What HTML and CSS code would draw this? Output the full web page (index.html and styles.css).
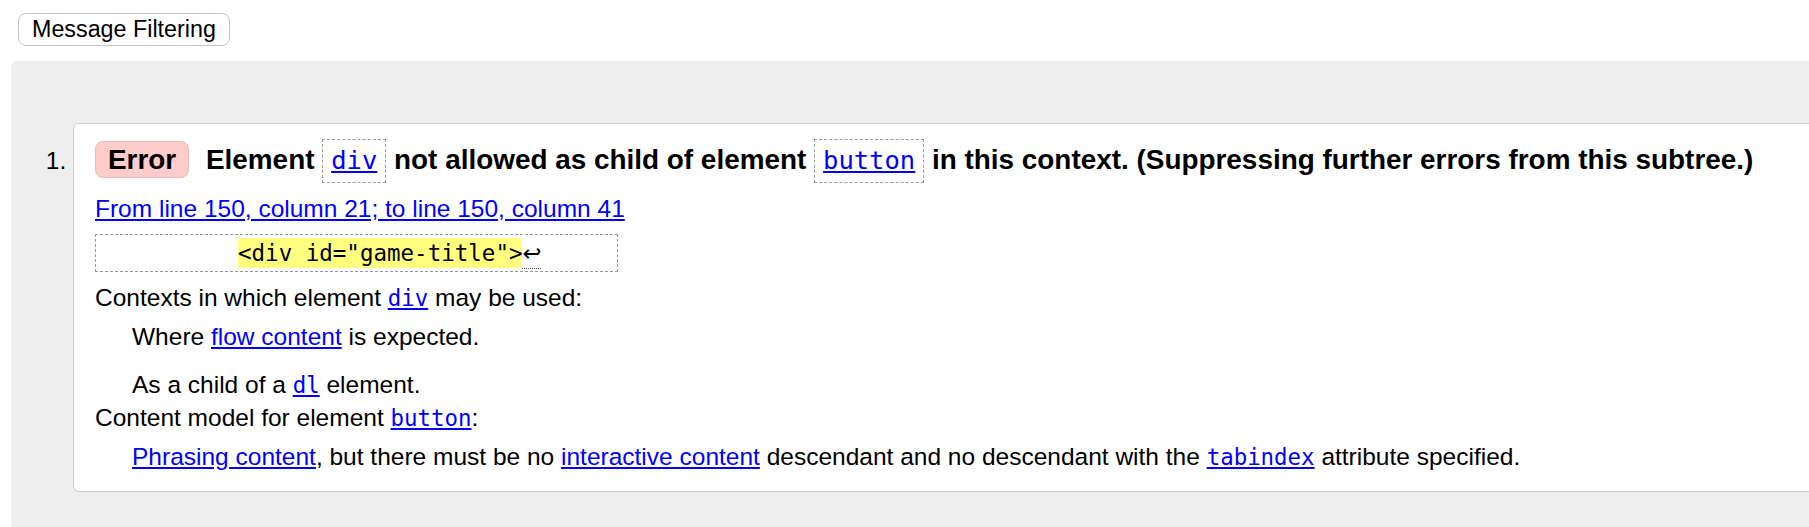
FILE: index.html
```html
<!DOCTYPE html>
<html lang="en">
<head>
<meta charset="utf-8">
<title>Nu Html Checker</title>
<link rel="stylesheet" href="styles.css">
</head>
<body>
<div class="toolbar"><button class="filter-btn" type="button">Message Filtering</button></div>
<section class="results">
<ol class="messages">
<li class="msg">
<p class="msg-head"><span class="badge">Error</span> Element <code class="tag"><a href="#">div</a></code> not allowed as child of element <code class="tag"><a href="#">button</a></code> in this context. (Suppressing further errors from this subtree.)</p>
<p class="loc"><a href="#">From line 150, column 21; to line 150, column 41</a></p>
<p class="extract"><code><mark>&lt;div id="game-title"&gt;</mark><span class="lf" title="Line break">↩</span></code></p>
<dl class="ctx">
<dt>Contexts in which element <a href="#"><code>div</code></a> may be used:</dt>
<dd class="first">Where <a href="#">flow content</a> is expected.</dd>
<dd class="second">As a child of a <a href="#"><code>dl</code></a> element.</dd>
<dt class="model">Content model for element <a href="#"><code>button</code></a>:</dt>
<dd class="last"><a href="#">Phrasing content</a>, but there must be no <a href="#">interactive content</a> descendant and no descendant with the <a href="#"><code>tabindex</code></a> attribute specified.</dd>
</dl>
</li>
</ol>
</section>
</body>
</html>
```

FILE: styles.css
```css
html, body {
  margin: 0;
  padding: 0;
  overflow: hidden;
  background: #fff;
}

body {
  font-family: "Liberation Sans", Arial, sans-serif;
  font-size: 24.5px;
  color: #000;
}

a {
  color: #00f;
}

code {
  font-family: "DejaVu Sans Mono", monospace;
  font-size: 0.915em;
  line-height: 1;
}

.toolbar {
  padding: 13px 0 0 18px;
}

.filter-btn {
  display: block;
  margin: 0;
  height: 33px;
  padding: 0 13px;
  font-family: "Liberation Sans", Arial, sans-serif;
  font-size: 23.3px;
  line-height: 31px;
  color: #000;
  background: #fff;
  border: 1px solid #c6c6c6;
  border-radius: 8px;
}

.results {
  margin: 15px 0 0 11px;
  width: 1900px;
  background: #eee;
  border-radius: 6px 0 0 0;
  padding: 62px 0 62px 62px;
}

.messages {
  margin: 0;
  padding: 0;
  list-style: decimal outside;
}

.msg {
  background: #fff;
  border: 1px solid #ccc;
  border-radius: 6px;
  padding: 15px 0 20px 21px;
  line-height: 28px;
}

.msg::marker {
  font-size: 24.5px;
  color: #000;
}

.msg-head {
  margin: 0;
  font-size: 27.9px;
  font-weight: bold;
  line-height: 32px;
}

.badge {
  display: inline-block;
  margin-right: 9px;
  padding: 0 12px;
  line-height: 35px;
  background: #fcc;
  border: 1px solid #e6bcbc;
  border-radius: 8px;
}

.tag {
  display: inline-block;
  padding: 0 8px;
  font-weight: normal;
  line-height: 41.5px;
  border: 1px dashed #999;
}

.loc {
  margin: 12px 0 0;
}

.extract {
  width: fit-content;
  margin: 11px 0 0;
  padding: 0 76px 0 142px;
  font-family: "DejaVu Sans Mono", monospace;
  font-size: 22.5px;
  line-height: 36px;
  border: 1px dashed #999;
}

.extract code {
  font-size: 1em;
  line-height: inherit;
}

.extract mark {
  padding: 2px 0;
  background: #ffff80;
  color: #000;
}

.lf {
  font-family: "DejaVu Sans", sans-serif;
  padding-bottom: 2px;
  border-bottom: 1px dotted #444;
}

.ctx {
  margin: 12px 0 0;
}

.ctx dt {
  margin: 0;
}

.ctx dd {
  margin: 0 0 0 37px;
}

.ctx dd.first {
  margin-top: 11.75px;
}

.ctx dd.second {
  margin-top: 19.6px;
}

.ctx dt.model {
  margin-top: 5.4px;
}

.ctx dd.last {
  margin-top: 10.3px;
}
```
